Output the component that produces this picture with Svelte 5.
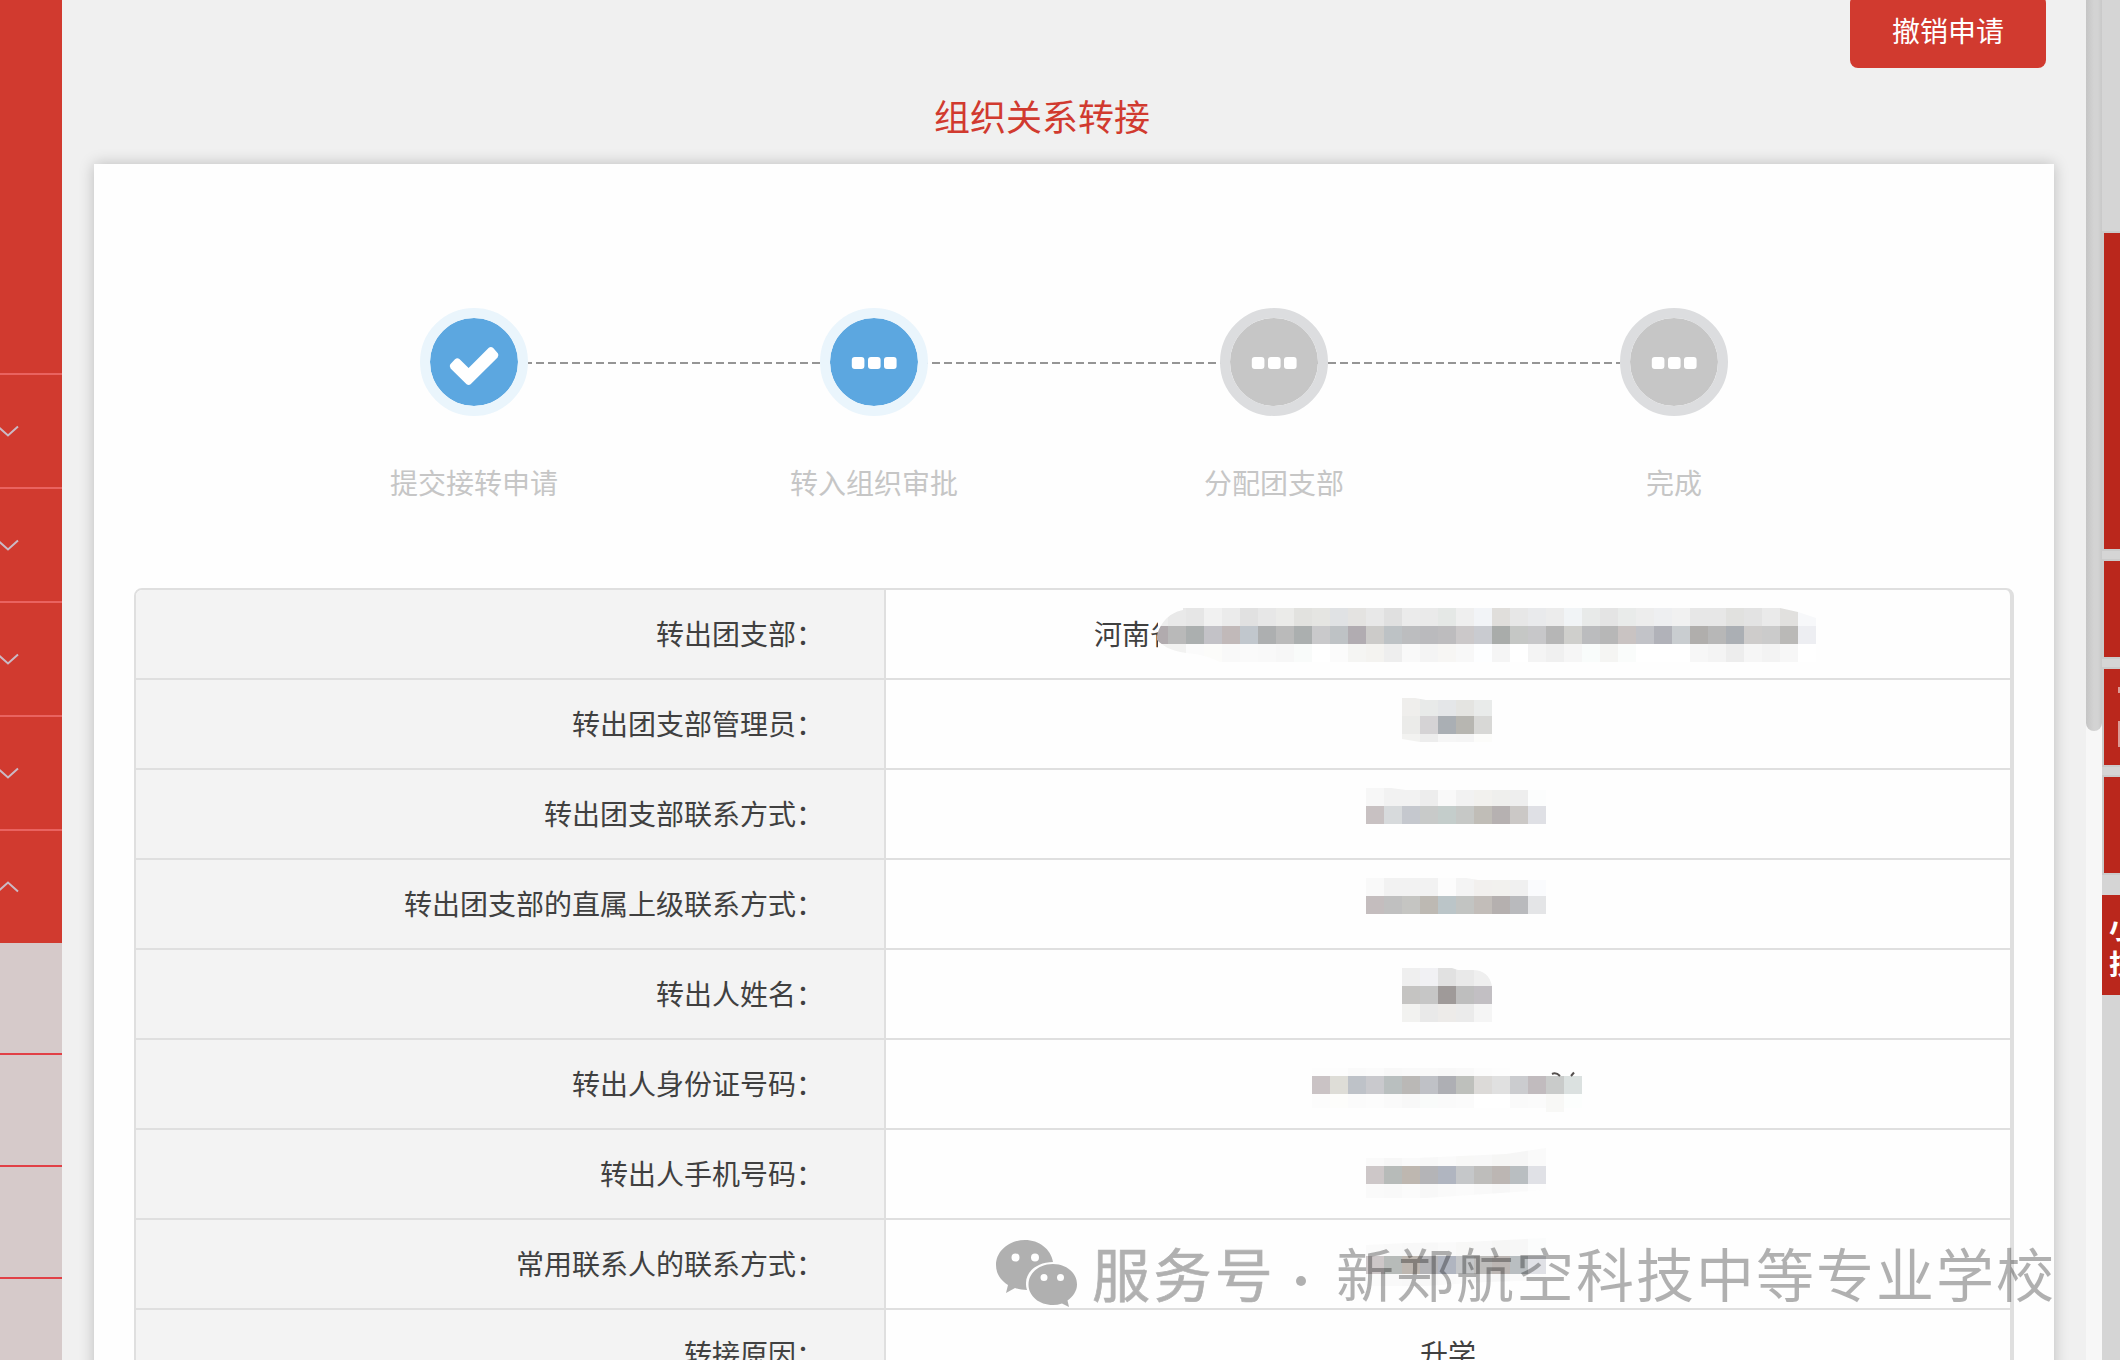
<script>
  const menu = ['down', 'down', 'down', 'down', 'up'];
  const subItems = [1, 2, 3, 4];

  const steps = [
    { label: '提交接转申请', state: 'done' },
    { label: '转入组织审批', state: 'active' },
    { label: '分配团支部', state: 'pending' },
    { label: '完成', state: 'pending' },
  ];

  // Masked values are strips of 18px blocks: y, height, first x, then one colour per block.
  const hex = (s) => s.split(' ').map((c) => '#' + c);
  const phone = hex('cdc7c8 b7bbb9 beb7b0 b4b4b7 b0b5c0 c5c7c9 bebdbb bcb6b3 b9bec1 e0e1e6');

  const rows = [
    {
      label: '转出团支部：',
      text: '河南省',
      partial: true,
      clip: 'M271 46C273 36 281 23 297 20V18H894L912 22L930 28V72H334C322 66 312 64 300 63C284 61 276 55 271 50Z',
      mask: [
        { y: 18, h: 18, x: 264, c: hex('eeeeee e9e9e9 e6e6e6 f1f1f1 ebebeb e1e1e1 e7e7e7 ebebe9 e2e2df e5e5e2 e0e2e4 e4e3e1 e8e8e8 e0e0e0 ebebeb eaeaea e5e8e6 efefef f2f4f7 e0dedb e7e7e7 e9eaec ececec f1f4f6 e8eae9 e4e4e4 e9ebea ededed eeeff1 f1f1f1 e7e7e7 e7e7e7 e1e1df e3e3e3 eaeaea e1e0de f7f8fa') },
        { y: 36, h: 18, x: 264, c: hex('b1abae b9b9b9 abafaf c3c2c7 c1b9b9 c1c7cd adafb0 bababa abafaf c9c9cb bec2c5 b1acb1 cccbc9 bdc2c5 bcbdbf bababd bdbcbe cbc8c9 c9cbd0 a9acaa c5c7c5 c7c7c9 b6b6b6 cfcfcc bbbcbe b7b7b7 c9c3c2 c2c3c8 b1b2b9 c9cdd0 b0aeac b7b7b7 abafb4 cecccb cbcbcb bab9b7 edeef2') },
        { y: 54, h: 18, x: 264, c: hex('f2f2f1 f2f2f1 fbfbfb fcfcfa f9f9f9 fafafa f9f9f9 f7f7f7 f9fbfa ffffff fbfbfb f5f5f3 f4f3f0 eeeeee f9f9f9 f4f4f4 f7f6f4 f8f8f8 fdfeff f5f5f5 ffffff f4f4f4 f0f0f0 f6f6f6 f9fcfb f5f5f3 fafcfb ffffff ffffff ffffff f7f7f7 f4f4f4 ededed f6f6f6 f3f3f3 f7f7f7 ffffff') },
      ],
    },
    {
      label: '转出团支部管理员：',
      clip: 'M516 18H529L540 20H606V62H534L516 59Z',
      mask: [
        { y: 18, h: 18, x: 516, c: hex('efeeec e8eae9 e4e6e8 e4e4e1 e9ebea') },
        { y: 36, h: 18, x: 516, c: hex('ebebe9 d5d3d5 aaafb4 b7b6b1 d8d8d6') },
        { y: 54, h: 8, x: 516, c: hex('f2f2f0 ededed f6f6f6 f5f5f5 fcfcfa') },
      ],
    },
    {
      label: '转出团支部联系方式：',
      clip: 'M480 18H505L520 20H660V54H480Z',
      mask: [
        { y: 18, h: 18, x: 480, c: hex('f7f7f7 f2f2f2 f2f2f2 ededed f9f9f9 f2f2f2 f2f1ee efefed eeeeee fcfdfd') },
        { y: 36, h: 18, x: 480, c: hex('c8c1c2 d7dadc c5c8ce c8cac9 c4cdcb c6c8c6 c0bdb7 b6b1b1 cbc8c6 dfe0e5') },
      ],
    },
    {
      label: '转出团支部的直属上级联系方式：',
      clip: 'M480 18H580L592 20H660V54H480Z',
      mask: [
        { y: 18, h: 18, x: 480, c: hex('f9f9f9 f2f2f2 f2f2f2 f2f2f2 fcfcfc f4f4f4 f2f0ee f2f1ee f0f0f0 fafbfd') },
        { y: 36, h: 18, x: 480, c: hex('c4bdbe c0c0c0 c5c5c2 bdb9b3 bbc5c8 c2c4c2 c2bdb9 b5b0af b9babd e4e5e7') },
      ],
    },
    {
      label: '转出人姓名：',
      clip: 'M516 18H566L572 20H586C598 20 604 26 606 36V72H516Z',
      mask: [
        { y: 18, h: 18, x: 516, c: hex('efefef f1f1f4 e1e1e1 e9e9e9 efefef') },
        { y: 36, h: 18, x: 516, c: hex('c5c4c2 c6c6c6 9f9a99 bebebe c2bfc3') },
        { y: 54, h: 18, x: 516, c: hex('f2f2f0 e9e9e9 edebe9 ebebeb f5f5f5') },
      ],
    },
    {
      label: '转出人身份证号码：',
      digits: true,
      clip: 'M426 28H700V72H426Z',
      mask: [
        { y: 28, h: 8, x: 426, c: hex('fdfdfd fdfdfd fafafa fbfbfb f8f8f8 f9f9f9 f9f9f9 f8f8f8 f9f9f9 fcfcfc fdfdfd') },
        { y: 36, h: 18, x: 426, c: hex('cac3c5 deddd7 bec2c8 c9c9cd b9bfbf bab8b6 bfc1c6 aeafb4 bec0bc dcdad8 e0e0e0 cbcccf c1bbbe c9cbca dbe1e0') },
        { y: 54, h: 14, x: 426, c: hex('fcfcfc fdfdfb fbfbfb fcfcfc fafafa f8f8f8 f9fbfa fafafa fbfbfb ffffff ffffff fafafa fbfbfb f8f8f6 fcfefd') },
        { y: 68, h: 4, x: 660, c: hex('f8f8f6') },
      ],
    },
    {
      label: '转出人手机号码：',
      clip: 'M480 28H530L620 24L660 18V60L600 64L540 68H480Z',
      mask: [
        { y: 18, h: 18, x: 480, c: hex('fafafa f7f7f7 fafafa f8f8f8 fafafa f8f8f7 f8f8f8 f6f6f5 f6f6f6 fafafa') },
        { y: 36, h: 18, x: 480, c: phone },
        { y: 54, h: 14, x: 480, c: hex('fafafa f9f9f9 fbfbfb f8f8f8 fafafa fbfbfb f9f9f9 f7f7f7 fafafa fdfdfd') },
      ],
    },
    {
      label: '常用联系人的联系方式：',
      clip: 'M480 25L520 23L580 22L660 18V60L600 62L540 66H480Z',
      mask: [
        { y: 18, h: 18, x: 480, c: hex('fafafa f9f9f9 f8f8f8 f8f8f8 fafafa f8f8f7 f8f8f8 f6f6f5 f7f7f7 fbfcfc') },
        { y: 36, h: 18, x: 480, c: phone },
        { y: 54, h: 14, x: 480, c: hex('fbfbfb f9f9f9 f8f8f8 f8f8f8 fafafa fbfbfb f9f9f9 f7f7f7 fafafa fdfdfd') },
      ],
    },
    { label: '转接原因：', text: '升学' },
  ];
</script>

<div class="page">
  <aside class="sidebar">
    <div class="side-top"></div>
    {#each menu as dir}
      <div class="side-item">
        <svg class={['chevron', dir]} width="24" height="16" viewBox="0 0 24 16">
          <path d="M2 3.500L12 12.500L22 3.500" />
        </svg>
      </div>
    {/each}
    {#each subItems as item (item)}
      <div class="sub-item"></div>
    {/each}
  </aside>

  <main class="main">
    <div class="toolbar"><button class="revoke">撤销申请</button></div>
    <h1 class="title">组织关系转接</h1>

    <section class="card">
      <div class="steps">
        <svg class="track" width="1092" height="2" viewBox="0 0 1092 2">
          <line x1="0" y1="1" x2="1092" y2="1" />
        </svg>
        {#each steps as step}
          <div class={['step', step.state]}>
            <div class="dot">
              <svg width="88" height="88" viewBox="0 0 88 88">
                {#if step.state === 'done'}
                  <path
                    d="M20.3 46.2Q18.8 48.4 20.6 50.4L36.6 66.2Q38.6 67.6 40.6 66.2L67.6 39.6Q69.4 37.4 67.8 35.2L63 29.8Q61 28 58.8 29.8L38.6 50L29.4 41Q27.2 39.4 25 41.2Z"
                  />
                {:else}
                  <rect x="21.8" y="39" width="12.6" height="12" rx="3" />
                  <rect x="38" y="39" width="12.6" height="12" rx="3" />
                  <rect x="54" y="39" width="12.6" height="12" rx="3" />
                {/if}
              </svg>
            </div>
            <div class="step-label">{step.label}</div>
          </div>
        {/each}
      </div>

      <div class="table">
        {#each rows as row, i}
          <div class="row">
            <div class="label">{row.label}</div>
            <div class={['value', row.partial && 'partial']}>
              {#if row.text}<span>{row.text}</span>{/if}
              {#if row.mask}
                <svg class="mask" width="1124" height="88" viewBox="0 0 1124 88" shape-rendering="crispEdges">
                  <clipPath id="mask-{i}"><path d={row.clip} /></clipPath>
                  <g clip-path="url(#mask-{i})">
                    {#each row.mask as strip}
                      {#each strip.c as color, n}
                        <rect x={strip.x + n * 18} y={strip.y} width="18" height={strip.h} fill={color} />
                      {/each}
                    {/each}
                  </g>
                  {#if row.digits}
                    <path class="digits" d="M666 34Q670 32 674 36M685 36L688 32.5" />
                  {/if}
                </svg>
              {/if}
            </div>
          </div>
        {/each}
      </div>
    </section>
  </main>

  <div class="scrollbar"><div class="thumb"></div></div>

  <aside class="rail">
    <div class="tab tall"></div>
    <div class="tab"></div>
    <div class="tab marked">
      <svg width="16" height="96" viewBox="0 0 16 96">
        <path d="M14 18h2v6h-2zM14 52h2v26h-2z" />
      </svg>
    </div>
    <div class="tab"></div>
    <div class="helper"><span>小</span><span>技</span></div>
  </aside>

  <div class="watermark">
    <svg width="84" height="70" viewBox="0 0 84 70">
      <path
        fill-rule="evenodd"
        d="M30 1C14 1 1 12 1 26C1 34 5 41 13 46L11 54L20 49C24 50.500 28 51 32 51C31 48 31 46 31 44C31 32 43 23 58 23C56 10 44 1 30 1ZM20.500 14.500a4 4 0 1 1 0 8a4 4 0 1 1 0-8ZM40 14.500a4 4 0 1 1 0 8a4 4 0 1 1 0-8Z"
      />
      <path
        fill-rule="evenodd"
        d="M58 25C44 25 33.500 34 33.500 45.500C33.500 57 44 66 58 66C61 66 64 65.500 67 64.500L74 68L72.500 61.500C78 57.500 82 52 82 45.500C82 34 71.500 25 58 25ZM49 35a3.500 3.500 0 1 1 0 7a3.500 3.500 0 1 1 0-7ZM65.500 35a3.500 3.500 0 1 1 0 7a3.500 3.500 0 1 1 0-7Z"
      />
    </svg>
    <span class="kind">服务号</span>
    <span class="sep"></span>
    <span class="name">新郑航空科技中等专业学校</span>
  </div>
</div>

<style>
  :global(body) {
    margin: 0;
    overflow: hidden;
  }
  .page {
    position: relative;
    display: flex;
    width: 2120px;
    height: 1360px;
    overflow: hidden;
    background: #f0f0f0;
    color: #404040;
    font-family: 'Noto Sans CJK SC', 'Noto Sans', sans-serif;
    font-size: 28px;
    line-height: 40px;
  }
  .page * {
    box-sizing: border-box;
  }

  .sidebar {
    flex: none;
    width: 62px;
    overflow: hidden;
    background: #d13a2f;
  }
  .side-top {
    height: 373px;
  }
  .side-item {
    display: flex;
    align-items: center;
    height: 114px;
    border-top: 2px solid #e96360;
  }
  .chevron {
    flex: none;
    margin-left: -4px;
    fill: none;
    stroke: #cbbac5;
    stroke-width: 2;
  }
  .chevron.up {
    transform: scaleY(-1);
  }
  .sub-item {
    height: 112px;
    border-bottom: 2px solid #e14046;
    background: #d6caca;
  }

  .main {
    flex: none;
    display: flex;
    flex-direction: column;
    width: 2024px;
  }
  .toolbar {
    flex: none;
    display: flex;
    justify-content: flex-end;
    height: 68px;
    padding-right: 40px;
  }
  .revoke {
    width: 196px;
    height: 73px;
    margin-top: -5px;
    padding: 0 0 3px;
    border: 0;
    border-radius: 8px;
    background: #d13a2f;
    color: #fff;
    font: inherit;
  }
  .title {
    flex: none;
    width: 1960px;
    height: 96px;
    margin: 0;
    color: #d13a2f;
    font-size: 36px;
    font-weight: 400;
    line-height: 94px;
    text-align: center;
  }
  .card {
    flex: none;
    width: 1960px;
    height: 1300px;
    margin-left: 32px;
    padding: 144px 40px 0;
    background: #fefefe;
    box-shadow: 0 0 14px rgba(0, 0, 0, 0.22);
  }

  .steps {
    display: grid;
    grid-template-columns: repeat(4, 400px);
    justify-content: center;
    height: 280px;
  }
  .track {
    grid-area: 1 / 1 / 2 / 5;
    justify-self: center;
    margin-top: 54px;
  }
  .track line {
    stroke: #959595;
    stroke-width: 2;
    stroke-dasharray: 8 4;
    stroke-dashoffset: 4;
  }
  .step {
    grid-row: 1;
    display: flex;
    flex-direction: column;
    align-items: center;
    gap: 46px;
  }
  .step:nth-of-type(1) {
    grid-column: 1;
  }
  .step:nth-of-type(2) {
    grid-column: 2;
  }
  .step:nth-of-type(3) {
    grid-column: 3;
  }
  .step:nth-of-type(4) {
    grid-column: 4;
  }
  .dot {
    z-index: 1;
    width: 108px;
    height: 108px;
    border: 10px solid #eaf5fc;
    border-radius: 50%;
    background: #5ca7e0;
    background-clip: padding-box;
  }
  .dot svg {
    display: block;
    fill: #fff;
  }
  .pending .dot {
    border-color: #dcdddf;
    background-color: #c6c6c6;
  }
  .step-label {
    color: #c6c6c6;
    line-height: 40px;
  }

  .table {
    width: 1880px;
    border: 2px solid #dfdfdf;
    border-right-width: 4px;
    border-radius: 8px 8px 0 0;
    overflow: hidden;
  }
  .row {
    display: grid;
    grid-template-columns: 748px 1fr;
    height: 90px;
    border-bottom: 2px solid #dfdfdf;
  }
  .label {
    padding-right: 60px;
    background: #f3f3f3;
    line-height: 86px;
    text-align: right;
    white-space: nowrap;
  }
  .value {
    display: grid;
    border-left: 2px solid #dfdfdf;
    line-height: 86px;
    text-align: center;
  }
  .value > * {
    grid-area: 1 / 1;
  }
  .partial {
    text-align: left;
  }
  .partial span {
    width: 272px;
    padding-left: 208px;
    overflow: hidden;
    white-space: nowrap;
  }
  .mask {
    display: block;
  }
  .digits {
    fill: none;
    stroke: #55504e;
    stroke-width: 2;
    shape-rendering: auto;
  }

  .scrollbar {
    flex: none;
    width: 16px;
    background: #f7f7f7;
  }
  .thumb {
    height: 731px;
    border-radius: 0 0 8px 8px;
    background: linear-gradient(90deg, #c5c5c5, #d3d3d3 50%, #d3d3d3 75%, #c8c8c8);
  }

  .rail {
    flex: none;
    width: 18px;
    padding-top: 231px;
    overflow: hidden;
    background: #d5d5d5;
  }
  .tab {
    height: 100px;
    margin-bottom: 8px;
    border: 2px solid #cbcbcb;
    border-right: 0;
    background: #ba271c;
  }
  .tab.tall {
    height: 320px;
  }
  .marked svg {
    display: block;
    fill: #dc9a95;
  }
  .helper {
    display: flex;
    flex-direction: column;
    height: 100px;
    margin-top: 20px;
    padding: 14px 0 0 7px;
    background: #ba271c;
    color: #fff;
    font-weight: 700;
    line-height: 36px;
  }

  .watermark {
    position: absolute;
    left: 995px;
    top: 1237px;
    display: flex;
    align-items: flex-start;
    color: #000;
    font-size: 58px;
    line-height: 70px;
    white-space: nowrap;
    opacity: 0.3;
  }
  .watermark svg {
    flex: none;
    margin-top: 2px;
    fill: #000;
  }
  .kind {
    width: 183px;
    margin-left: 13px;
    letter-spacing: 3.4px;
    -webkit-text-stroke: 0.7px #000;
  }
  .sep {
    width: 10px;
    height: 10px;
    margin: 39px 30px 0 21px;
    border-radius: 50%;
    background: #000;
  }
  .name {
    letter-spacing: 2px;
  }
</style>
